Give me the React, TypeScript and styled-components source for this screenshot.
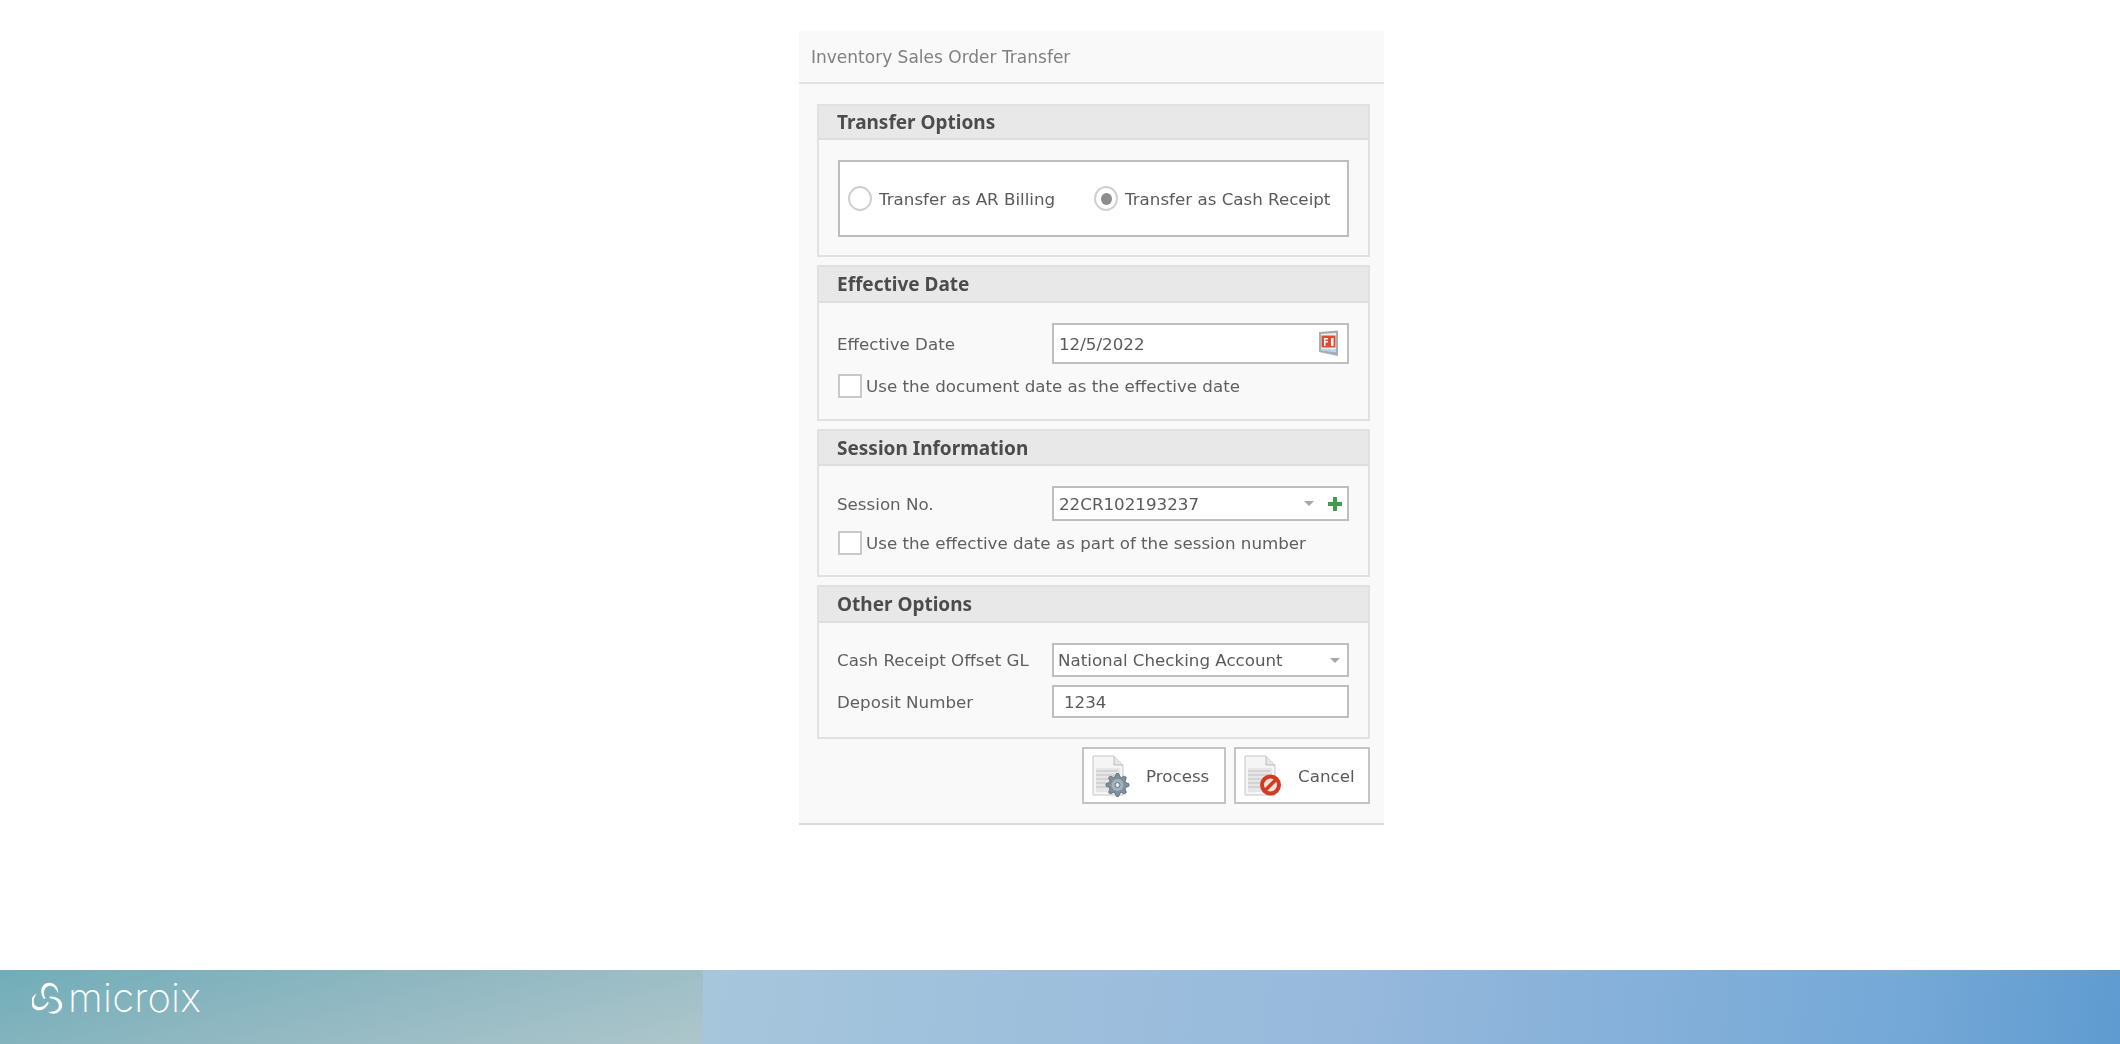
import type { ReactNode } from "react";
import styled, { createGlobalStyle } from "styled-components";

const Global = createGlobalStyle`
	html, body { margin: 0; padding: 0; background: #fff; }
	body { font-family: "DejaVu Sans", "Noto Sans", sans-serif; }
`;

const Page = styled.div`
	width: 2120px;
	height: 1044px;
	display: flex;
	flex-direction: column;
	overflow: hidden;
`;

const Main = styled.main`
	flex: 1;
	padding: 31px 0 0 799px;
`;

const Dialog = styled.section`
	width: 585px;
	height: 794px;
	box-sizing: border-box;
	background: #f9f9f9;
	border-bottom: 2px solid #dcdcdc;
	display: flex;
	flex-direction: column;
	font-size: 16.7px;
	filter: blur(0.4px);
`;

const TitleBar = styled.header`
	height: 53px;
	box-sizing: border-box;
	border-bottom: 2px solid #e2e2e2;
	display: flex;
	align-items: center;
	padding-left: 12px;
	font-size: 17px;
	color: #808080;
`;

const Content = styled.div`
	padding: 20px 14px 0 18px;
	display: flex;
	flex-direction: column;
	gap: 8px;
`;

const Group = styled.div`
	border: 2px solid #e1e1e1;
	display: flex;
	flex-direction: column;
`;

const GroupHeader = styled.div<{ $h?: number }>`
	height: ${(p) => p.$h ?? 34}px;
	box-sizing: border-box;
	background: #e8e8e8;
	border-bottom: 2px solid #dedede;
	display: flex;
	align-items: center;
	padding-left: 18px;
	font-family: "Noto Sans", sans-serif;
	font-size: 19px;
	font-weight: 700;
	color: #4c4c4c;
`;

const GroupBody = styled.div<{ $pb: number; $gap?: number }>`
	padding: 20px 19px ${(p) => p.$pb}px 18px;
	display: flex;
	flex-direction: column;
	gap: ${(p) => p.$gap ?? 10}px;
`;

const RadioBox = styled.div`
	height: 77px;
	box-sizing: border-box;
	margin-left: 1px;
	background: #fff;
	border: 2px solid #bdbdbd;
	display: flex;
	align-items: center;
	padding-left: 8px;
`;

const RadioOption = styled.label`
	display: flex;
	align-items: center;
	gap: 7px;
	width: 246px;
	color: #5a5a5a;
	white-space: nowrap;
`;

const RadioDot = styled.span<{ $on?: boolean }>`
	width: 24px;
	height: 25px;
	box-sizing: border-box;
	border-radius: 50%;
	border: 2px solid #cfcfcf;
	background: #fff;
	display: flex;
	align-items: center;
	justify-content: center;
	&::after {
		content: "";
		display: ${(p) => (p.$on ? "block" : "none")};
		width: 11px;
		height: 12px;
		border-radius: 50%;
		background: #8c8c8c;
	}
`;

const Row = styled.div`
	display: flex;
	align-items: center;
`;

const FieldLabel = styled.span`
	width: 215px;
	flex-shrink: 0;
	color: #5f5f5f;
	white-space: nowrap;
`;

const Field = styled.div<{ $h: number; $pl?: number; $pr?: number }>`
	flex: 1;
	height: ${(p) => p.$h}px;
	box-sizing: border-box;
	background: #fff;
	border: 2px solid #bebebe;
	display: flex;
	align-items: center;
	justify-content: space-between;
	padding: 0 ${(p) => p.$pr ?? 7}px 0 ${(p) => p.$pl ?? 5}px;
	color: #5a5a5a;
`;

const FieldIcons = styled.span`
	display: flex;
	align-items: center;
	gap: 14px;
`;

const Arrow = styled.span`
	width: 0;
	height: 0;
	border-left: 5px solid transparent;
	border-right: 5px solid transparent;
	border-top: 5px solid #a8a8a8;
`;

const CheckRow = styled.label`
	height: 24px;
	display: flex;
	align-items: center;
	gap: 4px;
	color: #5f5f5f;
	white-space: nowrap;
`;

const CheckBox = styled.span`
	width: 24px;
	height: 24px;
	margin-left: 1px;
	box-sizing: border-box;
	background: #fff;
	border: 2px solid #c9c9c9;
`;

const Actions = styled.div`
	display: flex;
	justify-content: flex-end;
	gap: 8px;
	margin-top: 8px;
	padding-right: 14px;
`;

const ActionButton = styled.button<{ $w: number; $pl: number }>`
	width: ${(p) => p.$w}px;
	height: 57px;
	box-sizing: border-box;
	background: #fff;
	border: 2px solid #c4c4c4;
	display: flex;
	align-items: center;
	gap: 16px;
	padding: 0 0 0 ${(p) => p.$pl}px;
	font: inherit;
	color: #5a5a5a;
`;

const Footer = styled.footer`
	height: 74px;
	flex-shrink: 0;
	display: flex;
`;

const FooterBrand = styled.div`
	width: 703px;
	flex-shrink: 0;
	box-sizing: border-box;
	background: linear-gradient(165deg, #70adb8 0%, #8fb7c1 45%, #aec6cb 100%);
	display: flex;
	align-items: center;
	gap: 5px;
	padding: 0 0 18px 32px;
	color: #fff;
`;

const BrandName = styled.span`
	font-family: Inter, "Noto Sans", sans-serif;
	font-size: 40px;
	font-weight: 200;
	line-height: 1;
	letter-spacing: 0.2px;
`;

const FooterRest = styled.div`
	flex: 1;
	background: linear-gradient(97deg, #a6c6dc 0%, #97b9dc 45%, #74a8d7 85%, #5f9bd0 100%);
`;

const DocIcon = ({ children }: { children: ReactNode }) => (
	<svg width="38" height="42" viewBox="0 0 38 42">
		<path d="M1 1h21l9 9v30H1z" fill="#f5f5f5" stroke="#c6c6c6" />
		<path d="M22 1v9h9" fill="#e6e6e6" stroke="#bdbdbd" />
		<path d="M4 13h24v24H4z" fill="#e6e6e6" />
		<path d="M4 16h22M4 20h22M4 24h18M4 28h14M4 32h14" stroke="#cdcdcd" strokeWidth="1.500" />
		{children}
	</svg>
);

// outline of a cog wheel with eight teeth
const gearPath = (cx: number, cy: number, outer: number, inner: number) => {
	const points: string[] = [];
	for (let i = 0; i < 32; i++) {
		const r = i % 4 < 2 ? outer : inner;
		const a = ((i - 0.5) * Math.PI) / 16;
		points.push(`${(cx + r * Math.cos(a)).toFixed(2)} ${(cy + r * Math.sin(a)).toFixed(2)}`);
	}
	return `M${points.join("L")}z`;
};

const GearBadge = () => (
	<>
		<path d={gearPath(25.5, 30, 11.5, 8.5)} fill="#7f909d" stroke="#66747f" />
		<circle cx="25.5" cy="30" r="6" fill="#a3b2bd" />
		<circle cx="25.5" cy="30" r="2.500" fill="#e3e8ec" stroke="#66747f" />
	</>
);

const StopBadge = () => (
	<>
		<circle cx="26.5" cy="30" r="8.500" fill="#f6e3dd" stroke="#d33a22" strokeWidth="4" />
		<path d="M20.500 36l12-12" stroke="#d33a22" strokeWidth="3.500" />
	</>
);

const CalendarIcon = () => (
	<svg width="22" height="27" viewBox="0 0 22 27">
		<path d="M1 2l19-1.500V26L1 22z" fill="#a3aeb8" />
		<path d="M3 4l15-1v19L3 20z" fill="#f2f2f2" />
		<path d="M3.500 5.500h14v12h-14z" fill="#e5492d" />
		<path d="M6 8h4v1.500H7.500V11H10v1.500H7.500V16H6zM13 8h2.500v8H13z" fill="#fff" />
		<path d="M3 18.500l15 1V22L3 20.500z" fill="#b7d2ea" />
	</svg>
);

const PlusIcon = () => (
	<svg width="14" height="14" viewBox="0 0 14 14">
		<path d="M5 0h4v5h5v4H9v5H5V9H0V5h5z" fill="#3f9a4a" />
	</svg>
);

// three interlocking loops: each one starts near the centre, rounds its lobe and tapers off
const LogoMark = () => (
	<svg width="31" height="33" viewBox="0 0 31 33" fill="#fff">
		{[0, 120, 240].map((angle) => (
			<path
				key={angle}
				transform={`rotate(${angle} 15.5 17.500)`}
				d="M12 17C7.500 11 8.500 2.500 15.500 1c6-1 11 3.500 10.500 10-2-4.500-5.500-8-9.500-7C12 5.500 10.500 11 13.500 16.500z"
			/>
		))}
	</svg>
);

export default function App() {
	return (
		<Page>
			<Global />
			<Main>
				<Dialog>
					<TitleBar>Inventory Sales Order Transfer</TitleBar>
					<Content>
						<Group>
							<GroupHeader>Transfer Options</GroupHeader>
							<GroupBody $pb={18}>
								<RadioBox>
									<RadioOption>
										<RadioDot />
										Transfer as AR Billing
									</RadioOption>
									<RadioOption>
										<RadioDot $on />
										Transfer as Cash Receipt
									</RadioOption>
								</RadioBox>
							</GroupBody>
						</Group>
						<Group>
							<GroupHeader $h={36}>Effective Date</GroupHeader>
							<GroupBody $pb={21}>
								<Row>
									<FieldLabel>Effective Date</FieldLabel>
									<Field $h={41}>
										12/5/2022
										<CalendarIcon />
									</Field>
								</Row>
								<CheckRow>
									<CheckBox />
									Use the document date as the effective date
								</CheckRow>
							</GroupBody>
						</Group>
						<Group>
							<GroupHeader $h={35}>Session Information</GroupHeader>
							<GroupBody $pb={20}>
								<Row>
									<FieldLabel>Session No.</FieldLabel>
									<Field $h={35} $pr={5}>
										22CR102193237
										<FieldIcons>
											<Arrow />
											<PlusIcon />
										</FieldIcons>
									</Field>
								</Row>
								<CheckRow>
									<CheckBox />
									Use the effective date as part of the session number
								</CheckRow>
							</GroupBody>
						</Group>
						<Group>
							<GroupHeader $h={36}>Other Options</GroupHeader>
							<GroupBody $pb={19} $gap={8}>
								<Row>
									<FieldLabel>Cash Receipt Offset GL</FieldLabel>
									<Field $h={34} $pl={4}>
										National Checking Account
										<Arrow />
									</Field>
								</Row>
								<Row>
									<FieldLabel>Deposit Number</FieldLabel>
									<Field $h={33} $pl={10}>
										1234
									</Field>
								</Row>
							</GroupBody>
						</Group>
					</Content>
					<Actions>
						<ActionButton $w={144} $pl={8}>
							<DocIcon>
								<GearBadge />
							</DocIcon>
							Process
						</ActionButton>
						<ActionButton $w={136} $pl={8}>
							<DocIcon>
								<StopBadge />
							</DocIcon>
							Cancel
						</ActionButton>
					</Actions>
				</Dialog>
			</Main>
			<Footer>
				<FooterBrand>
					<LogoMark />
					<BrandName>microix</BrandName>
				</FooterBrand>
				<FooterRest />
			</Footer>
		</Page>
	);
}
